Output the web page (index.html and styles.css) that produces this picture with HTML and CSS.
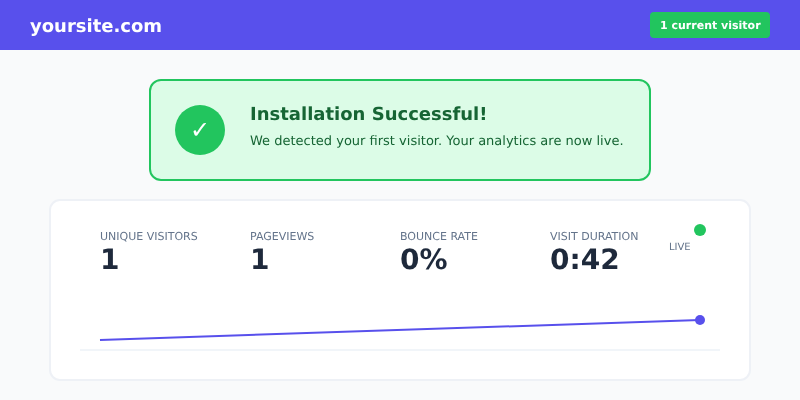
FILE: index.html
```html
<!DOCTYPE html>
<html lang="en">
<head>
<meta charset="utf-8">
<title>yoursite.com</title>
<link rel="stylesheet" href="styles.css">
</head>
<body>
<header class="topbar">
  <div class="logo txt">yoursite.com</div>
  <div class="badge"><span class="txt">1 current visitor</span></div>
</header>
<main class="content">
  <section class="banner">
    <div class="check"><span class="txt">✓</span></div>
    <div class="banner-text txt">
      <h1 class="banner-title">Installation Successful!</h1>
      <p class="banner-sub">We detected your first visitor. Your analytics are now live.</p>
    </div>
  </section>
  <section class="card">
    <div class="stats txt">
      <div class="stat"><div class="stat-label">Unique Visitors</div><div class="stat-value">1</div></div>
      <div class="stat"><div class="stat-label">Pageviews</div><div class="stat-value">1</div></div>
      <div class="stat"><div class="stat-label">Bounce Rate</div><div class="stat-value">0%</div></div>
      <div class="stat"><div class="stat-label">Visit Duration</div><div class="stat-value">0:42</div></div>
    </div>
    <div class="live-dot"></div>
    <div class="live-label txt">LIVE</div>
    <svg class="chart" width="640" height="60" viewBox="0 0 640 60" aria-hidden="true">
      <line class="chart-base" x1="0" y1="59" x2="640" y2="59"></line>
      <line class="chart-line" x1="20" y1="49" x2="620" y2="29"></line>
      <circle class="chart-point" cx="620" cy="29" r="5"></circle>
    </svg>
  </section>
</main>
</body>
</html>
```
FILE: styles.css
```css
* { box-sizing: border-box; }
html, body { margin: 0; padding: 0; }
body {
  width: 800px;
  height: 400px;
  overflow: hidden;
  background: #f9fafb;
  font-family: "DejaVu Sans", sans-serif;
  text-rendering: geometricPrecision;
}
.txt { will-change: transform; }
.topbar {
  height: 50px;
  padding: 0 30px;
  background: #5850ec;
  display: flex;
  align-items: center;
  justify-content: space-between;
}
.logo { margin-top: 2px; color: #fff; font-size: 18px; font-weight: 700; }
.badge {
  width: 120px;
  height: 26px;
  display: flex;
  align-items: center;
  justify-content: center;
  background: #22c55e;
  color: #fff;
  font-size: 11px;
  font-weight: 700;
  border-radius: 4px;
}
.content {
  display: flex;
  flex-direction: column;
  align-items: center;
  padding-top: 29px;
  gap: 18px;
}
.banner {
  width: 502px;
  height: 102px;
  padding: 0 24px;
  display: flex;
  align-items: center;
  gap: 25px;
  background: #dcfce7;
  border: 2px solid #22c55e;
  border-radius: 12px;
}
.check {
  width: 50px;
  height: 50px;
  flex: none;
  border-radius: 50%;
  background: #22c55e;
  color: #fff;
  font-size: 24px;
  display: flex;
  align-items: center;
  justify-content: center;
}
.banner-text { margin-top: -8px; }
.banner-title {
  margin: 0 0 9px;
  font-size: 18px;
  line-height: 21px;
  font-weight: 700;
  color: #166534;
}
.banner-sub {
  margin: 0;
  font-size: 13px;
  line-height: 15px;
  color: #166534;
  white-space: nowrap;
}
.card {
  position: relative;
  width: 702px;
  height: 182px;
  padding: 29px 29px 0;
  background: #fff;
  border: 2px solid #eef1f6;
  border-radius: 11px;
}
.stats { display: flex; padding-left: 20px; }
.stat { width: 150px; }
.stat-label {
  font-size: 11px;
  line-height: 14px;
  text-transform: uppercase;
  color: #64748b;
}
.stat-value {
  margin-top: -1px;
  font-size: 28px;
  line-height: 33px;
  font-weight: 700;
  color: #1e293b;
}
.live-dot {
  position: absolute;
  left: 643px;
  top: 23px;
  width: 12px;
  height: 12px;
  border-radius: 50%;
  background: #22c55e;
}
.live-label {
  position: absolute;
  left: 618px;
  top: 41px;
  font-size: 10px;
  line-height: 12px;
  color: #64748b;
}
.chart { display: block; margin-top: 15px; }
.chart-base { stroke: #f1f5f9; stroke-width: 2; }
.chart-line { stroke: #5850ec; stroke-width: 2; }
.chart-point { fill: #5850ec; }
```
